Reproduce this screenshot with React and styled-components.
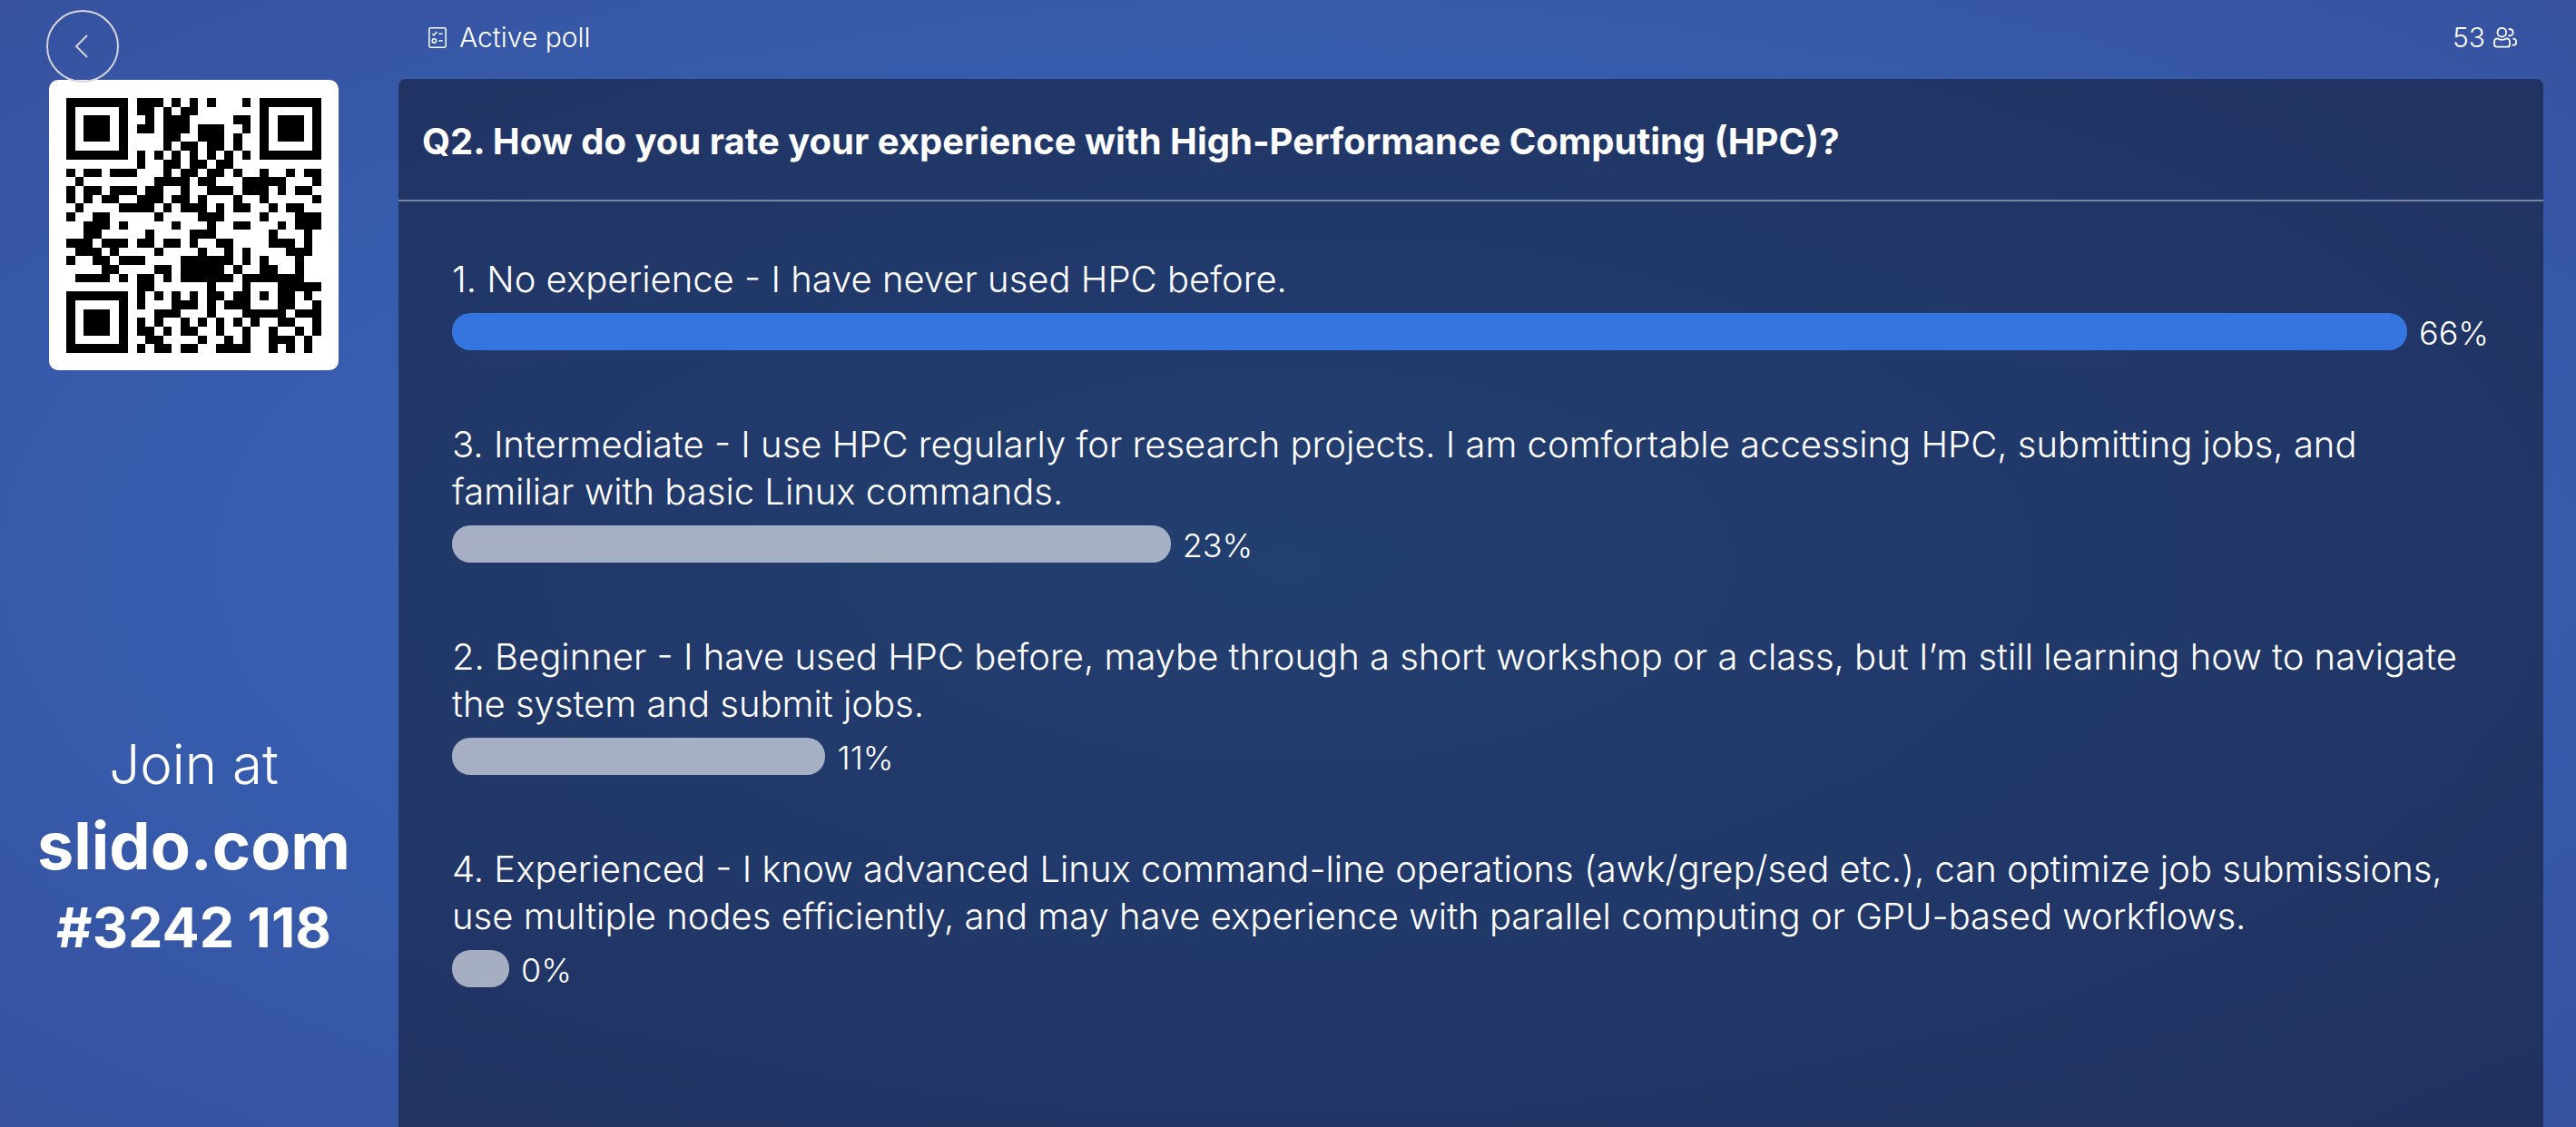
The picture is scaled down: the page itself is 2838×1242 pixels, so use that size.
import React from "react";
import styled, { createGlobalStyle } from "styled-components";

const GlobalStyle = createGlobalStyle`
  *, *::before, *::after { box-sizing: border-box; }
  body {
    margin: 0;
    color: #fff;
    background: #37549f;
    font-family: Inter, "Liberation Sans", sans-serif;
    font-size: 40px;
    font-weight: 300;
  }
`;

const Page = styled.div`
  display: flex;
  min-height: 100vh;
  padding-right: 36px;
  background: radial-gradient(ellipse at center, #3a69ba 0%, #375cad 60%, #36529f 100%);
`;

const Sidebar = styled.aside`
  position: relative;
  display: flex;
  flex-direction: column;
  align-items: center;
  flex: 0 0 427px;
  margin-right: 12px;
  padding: 88px 0 178px;
`;

const BackButton = styled.button`
  position: absolute;
  top: 11px;
  left: 51px;
  display: grid;
  place-items: center;
  width: 80px;
  height: 80px;
  padding: 0;
  border: 2px solid #d6d6da;
  border-radius: 50%;
  background: transparent;
  color: #d6d6da;
  cursor: pointer;
`;

const QrCard = styled.div`
  display: grid;
  place-items: center;
  width: 319px;
  height: 320px;
  border-radius: 10px;
  background: #fff;
`;

const Join = styled.div`
  margin-top: auto;
  text-align: center;
  white-space: nowrap;
`;

const JoinLabel = styled.p`
  margin: 0;
  font-size: 60px;
  line-height: 84px;
`;

const JoinLink = styled.a`
  display: block;
  color: inherit;
  font-size: 72px;
  font-weight: 700;
  line-height: 96px;
  text-decoration: none;
`;

const JoinCode = styled.p`
  margin: 0;
  font-size: 61px;
  font-weight: 700;
  line-height: 84px;
`;

const Main = styled.main`
  display: flex;
  flex: 1;
  flex-direction: column;
  min-width: 0;
`;

const TopBar = styled.header`
  display: flex;
  justify-content: space-between;
  padding: 23px 29px 28px 33px;
  font-size: 30px;
  line-height: 36px;
`;

const Status = styled.div`
  display: flex;
  align-items: center;
  gap: ${(p) => p.$gap}px;
`;

const Panel = styled.section`
  flex: 1;
  border-radius: 8px 8px 0 0;
  background: rgba(0, 0, 0, 0.4);
`;

const Question = styled.h1`
  margin: 0;
  padding: 43px 26px 38px;
  border-bottom: 2px solid rgba(255, 255, 255, 0.4);
  font-size: 40px;
  font-weight: 700;
  line-height: 52px;
`;

const Options = styled.ul`
  display: flex;
  flex-direction: column;
  gap: 78px;
  margin: 0;
  padding: 60px 60px 60px 59px;
  list-style: none;
`;

const OptionText = styled.p`
  margin: 0 0 11px;
  line-height: 52px;
`;

const Result = styled.div`
  display: flex;
  align-items: center;
  gap: 13px;
  height: 41px;
`;

const Bar = styled.div`
  flex: none;
  width: calc(63px + (100% - 153px) * ${(p) => p.$ratio});
  height: 41px;
  border-radius: 20px;
  background: ${(p) => (p.$leading ? "#3575e0" : "rgba(255, 255, 255, 0.6)")};
`;

const Percent = styled.span`
  padding-top: 2px;
  font-size: 36px;
  line-height: 40px;
`;

const MODULES = [
  "0-6 8-10 12 14 16 20 22-28",
  "0 6 8-9 11 13-14 22 28",
  "0 2-4 6 9 11-13 19-20 22 24-26 28",
  "0 2-4 6 8-9 11-13 15-17 20 22 24-26 28",
  "0 2-4 6 11-12 15-17 19 22 24-26 28",
  "0 6 11 13-14 16-17 19 22 28",
  "0-6 8 10 12 14 16 18 20 22-28",
  "8 11-12 14-15 17-18",
  "0 2-3 5-7 11 13-14 16-17 19 22 25 27-28",
  "1 10-13 15-16 20-24 28",
  "0 2-3 5-7 9-10 13 16-18 20-22 24 26-27",
  "0 2 4-5 8-10 12-13 15 19 22 28",
  "1 6-9 11 13-15 17 19-20 23 25-26",
  "0 3-4 10 15-17 22 26-28",
  "2-4 6 12 16 19-20 24 26-28",
  "2-3 9 14-16 23 27",
  "0-2 4-6 8-9 11-12 14 17-18 23-25 27",
  "1-3 5 10 15 18 20 25-27",
  "0 3-4 6-8 13-18 20 22 26",
  "4-5 10-11 13-17 19 22-23 26",
  "1-4 6 8-9 11 13-18 20-26",
  "8-9 16 20 24-28",
  "0-6 8 10 12 14 16-17 19-20 22 24-25 27",
  "0 6 8 12-14 16 18-20 24-25 28",
  "0 2-4 6 10-12 16 20-24 26-28",
  "0 2-4 6 8 10 13 15 17 19 21 24-25 28",
  "0 2-4 6 8-9 11 13-14 17 20 23 26 28",
  "0 6 9-10 15 18 20 23-25 27",
  "0-6 8 10-11 13-14 17-20 23 25 27",
];

const qrPath = MODULES.map((row, y) =>
  row
    .split(" ")
    .map((run) => {
      const [from, to = from] = run.split("-").map(Number);
      return `M${from} ${y}h${to - from + 1}v1H${from}z`;
    })
    .join("")
).join("");

function QrCode() {
  return (
    <svg width="281" height="281" viewBox="0 0 29 29" shapeRendering="crispEdges" role="img" aria-label="QR code">
      <path d={qrPath} fill="#000" />
    </svg>
  );
}

function PollIcon() {
  return (
    <svg width="20" height="23" viewBox="0 0 60 69" fill="none" stroke="currentColor" strokeWidth="4.5" aria-hidden="true">
      <rect x="2.5" y="2.5" width="55" height="64" rx="5" />
      <path d="M13 22l5 5 10-12M34 22h13M34 45h13" />
      <circle cx="19" cy="45" r="6.5" />
    </svg>
  );
}

function PeopleIcon() {
  return (
    <svg width="26" height="23" viewBox="0 0 78 69" fill="none" stroke="currentColor" strokeWidth="5.5" strokeLinejoin="round" aria-hidden="true">
      <circle cx="28" cy="17" r="14.5" />
      <path d="M14 37C19 43 37 43 42 37C50 37 54 42 54 49V56C54 62 51 65 46 65H12C6 65 3 62 3 56V49C3 42 7 37 14 37Z" />
      <path d="M50 7C57 4 65 9 65 17C65 25 57 31 49 27" />
      <path d="M64 38C71 38 75 42 75 48V52C75 56 73 59 69 59H62" />
    </svg>
  );
}

const OPTIONS = [
  { text: "1. No experience - I have never used HPC before.", percent: 66 },
  {
    text: "3. Intermediate - I use HPC regularly for research projects. I am comfortable accessing HPC, submitting jobs, and familiar with basic Linux commands.",
    percent: 23,
  },
  {
    text: "2. Beginner - I have used HPC before, maybe through a short workshop or a class, but I’m still learning how to navigate the system and submit jobs.",
    percent: 11,
  },
  {
    text: "4. Experienced - I know advanced Linux command-line operations (awk/grep/sed etc.), can optimize job submissions, use multiple nodes efficiently, and may have experience with parallel computing or GPU-based workflows.",
    percent: 0,
  },
];

const highest = Math.max(...OPTIONS.map((o) => o.percent));

export default function App() {
  return (
    <>
      <GlobalStyle />
      <Page>
        <Sidebar>
          <QrCard>
            <QrCode />
          </QrCard>
          <Join>
            <JoinLabel>Join at</JoinLabel>
            <JoinLink href="#join">slido.com</JoinLink>
            <JoinCode>#3242 118</JoinCode>
          </Join>
          <BackButton type="button" aria-label="Back">
            <svg width="18" height="26" viewBox="0 0 18 26" fill="none" stroke="currentColor" strokeWidth="2" aria-hidden="true">
              <path d="M14 1L2 13L14 25" />
            </svg>
          </BackButton>
        </Sidebar>
        <Main>
          <TopBar>
            <Status $gap={14}>
              <PollIcon />
              <span>Active poll</span>
            </Status>
            <Status $gap={9}>
              <span>53</span>
              <PeopleIcon />
            </Status>
          </TopBar>
          <Panel>
            <Question>Q2. How do you rate your experience with High-Performance Computing (HPC)?</Question>
            <Options>
              {OPTIONS.map((option) => (
                <li key={option.percent}>
                  <OptionText>{option.text}</OptionText>
                  <Result>
                    <Bar $ratio={option.percent / highest} $leading={option.percent === highest} />
                    <Percent>{option.percent}%</Percent>
                  </Result>
                </li>
              ))}
            </Options>
          </Panel>
        </Main>
      </Page>
    </>
  );
}
